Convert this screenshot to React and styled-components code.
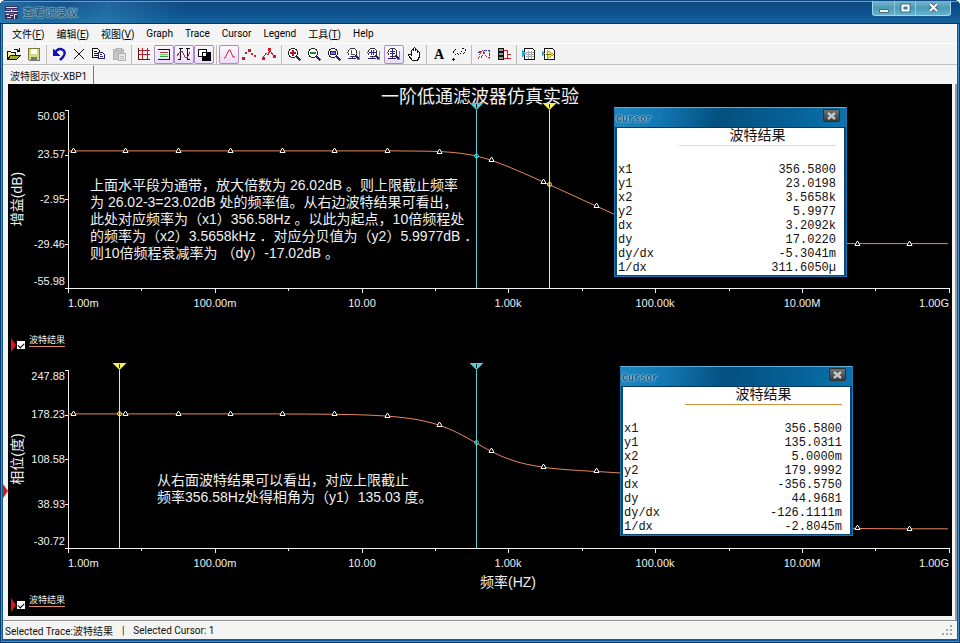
import styled, { createGlobalStyle, css } from "styled-components";

const GlobalStyle = createGlobalStyle`
  * {
    box-sizing: border-box;
  }
  body {
    margin: 0;
    background: #fff;
    font-family: Roboto, "Noto Sans CJK SC", sans-serif;
    font-size: 10px;
    color: #111;
  }
  button {
    font: inherit;
    padding: 0;
    margin: 0;
    border: 0;
    background: none;
  }
`;

const Frame = styled.div`
  min-height: 100vh;
  display: flex;
  flex-direction: column;
  padding: 0 3px 4px;
  border-radius: 6px 6px 0 0;
  overflow: hidden;
  background: #0c5c9c;
  box-shadow: inset 0 0 0 1px #0b3a6c, inset 0 0 0 2px #3c8cc8;
`;

const TitleBar = styled.header`
  height: 24px;
  margin: 0 -3px;
  padding: 0 9px 0 5px;
  display: flex;
  justify-content: space-between;
  border-top: 1px solid #0d4a83;
  border-bottom: 1px solid #06305e;
  box-shadow: inset 0 1px 0 #5b9fd6;
  background: linear-gradient(
      115deg,
      rgba(80, 170, 215, 0.4) 0,
      rgba(80, 170, 215, 0.1) 55px,
      rgba(80, 170, 215, 0.3) 100px,
      transparent 170px
    ),
    linear-gradient(#10467e, #0d5290 50%, #136299);
`;

const WindowTitle = styled.h1`
  margin: 0;
  display: flex;
  align-items: center;
  gap: 5px;
  font-size: 11px;
  font-weight: 700;
  color: #2b5f80;
  text-shadow: 0 0 1px #b5d4e0, 0 0 1px #8fbcd0, 0 0 2px #7fb0c8;
`;

const WindowButtons = styled.div`
  display: flex;
  height: 15px;
  border: 1px solid #a0d6e6;
  border-top: 0;
  border-radius: 0 0 3px 3px;
  background: linear-gradient(#79b5cb, #4a9bb9 50%, #67b3cb);
`;

const WindowButton = styled.button`
  width: ${(props) => (props.$wide ? "35px" : "21px")};
  display: flex;
  align-items: center;
  justify-content: center;
  & + & {
    border-left: 1px solid #94cbdc;
  }
`;

const MenuBar = styled.nav`
  height: 20px;
  display: flex;
  align-items: center;
  gap: 12px;
  padding-left: 9px;
  background: #f4f4f4;
  border-bottom: 1px solid #fff;
`;

const Toolbar = styled.div`
  height: 21px;
  display: flex;
  align-items: center;
  padding-left: 1px;
  background: #f3f3f3;
  border-bottom: 1px solid #c0c0c0;
`;

const Separator = styled.span`
  width: 1px;
  height: 19px;
  margin: 0 2px;
  background: #bdbdbd;
`;

const ToolButton = styled.button`
  width: 20px;
  height: 19px;
  display: flex;
  align-items: center;
  justify-content: center;
  border-radius: 2px;
  ${(props) =>
    props.$pressed &&
    css`
      border: 1px solid #a98fc0;
      background: linear-gradient(#fbf6fe, #ecdcf8);
    `}
`;

const Tabs = styled.div`
  height: 19px;
  display: flex;
  background: #f4f4f4;
`;

const Tab = styled.button`
  padding: 0 6px 0 7px;
  border-top: 1px solid #fff;
  border-right: 1px solid #777;
  font-size: 10px;
  color: #111;
`;

const Workspace = styled.div`
  flex: 1;
  display: flex;
  position: relative;
  padding: 0 5px 4px;
  background: #f4f4f4;
  border-bottom: 1px solid #8d8d8d;
  box-shadow: inset -2px 0 0 #9a9a9a;
`;

const PanePointer = styled.span`
  position: absolute;
  left: 0;
  top: 400px;
  border: 7px solid transparent;
  border-left: 5px solid #d8161c;
  border-right: 0;
`;

const Canvas = styled.main`
  flex: 1;
  position: relative;
  background: #000;
  color: #eee;
`;

const Plot = styled.svg`
  display: block;
  width: 100%;
  fill: #f0f0f0;
  font-family: "Liberation Sans", "Noto Sans CJK SC", sans-serif;
  font-size: 14px;
`;

const TickText = styled.text`
  font-size: 11px;
`;

const TitleText = styled.text`
  font-size: 18px;
`;

const Legend = styled.label`
  height: 22px;
  display: flex;
  align-items: center;
  padding-left: 3px;
  font-size: 9px;
  line-height: 12px;
`;

const LegendPointer = styled.span`
  margin-top: 8px;
  border: 7px solid transparent;
  border-left: 5px solid #d8161c;
  border-right: 0;
`;

const LegendCheck = styled.input`
  appearance: none;
  width: 8px;
  height: 8px;
  margin: 7px 4px 0 1px;
  background: #fff;
  &:checked::after {
    content: "";
    display: block;
    width: 5px;
    height: 3px;
    margin: 2px 0 0 1px;
    border: solid #000;
    border-width: 0 0 1px 1px;
    transform: rotate(-45deg);
  }
`;

const LegendText = styled.span`
  height: 13px;
  margin-top: -1px;
  border-bottom: 1px solid #e08a5c;
`;

const CursorWindow = styled.section`
  position: absolute;
  top: ${(props) => props.$top}px;
  right: ${(props) => props.$right}px;
  width: 233px;
  padding: 0 2px 1px;
  border: 1px solid #1978b4;
  border-top-color: #5ab0dc;
  background: #06477c;
  color: #111;
`;

const CursorBar = styled.header`
  height: 20px;
  margin: 0 -2px;
  padding: 1px 6px 0 1px;
  display: flex;
  justify-content: space-between;
  border-bottom: 1px solid #04365f;
  background: linear-gradient(
    100deg,
    #1c88bf,
    #1277b2 20%,
    #04507f 45%,
    #056096 75%,
    #0b74ae
  );
`;

const CursorTitle = styled.h2`
  margin: 5px 0 0;
  font: bold 10px/12px "Liberation Mono", monospace;
  color: #12507c;
  text-shadow: 0 0 1px #b8e2f0, 0 0 1px #a4d6ea, 0 0 2px #8fcce4;
`;

const CloseButton = styled.button`
  width: 17px;
  height: 13px;
  display: flex;
  align-items: center;
  justify-content: center;
  border: 1px solid #2a2f33;
  border-radius: 0 0 2px 2px;
  background: linear-gradient(#6e7274, #383b3d);
`;

const Results = styled.table`
  width: 100%;
  height: 147px;
  border-spacing: 0;
  background: #fff;
  font: 12px/14px "Liberation Mono", monospace;
  th,
  td {
    height: 14px;
    padding: 0 0 0 1px;
    font-weight: 400;
    text-align: left;
  }
  td {
    padding-right: 8px;
    text-align: right;
  }
`;

const TraceHead = styled.th`
  && {
    width: 165px;
    height: 35px;
    padding: 0 8px 0 0;
    vertical-align: top;
    font: 14px/12px "Noto Sans CJK SC", sans-serif;
    text-align: center;
  }
`;

const TraceName = styled.span`
  display: block;
  height: 18px;
  border-bottom: 1px solid ${(props) => props.$color};
`;

const StatusBar = styled.footer`
  height: 18px;
  display: flex;
  align-items: center;
  gap: 9px;
  padding: 0 4px 0 2px;
  background: #f4f4f2;
  border-top: 1px solid #fff;
`;

const Grip = styled.svg`
  margin-left: auto;
  fill: #a8a8a8;
`;

const Icon = ({ children }) => (
  <svg
    width="16"
    height="16"
    viewBox="0 0 16 16"
    fill="none"
    stroke="#111"
    shapeRendering="crispEdges"
  >
    {children}
  </svg>
);

const Lens = ({ children }) => (
  <Icon>
    <circle cx="7" cy="7" r="4.5" fill="#fff" stroke="#222" />
    <path d="M10.5 10.5l4 4" stroke="#22227a" strokeWidth="2" />
    {children}
  </Icon>
);

const MiniLens = ({ children }) => (
  <Icon>
    <circle cx="6.5" cy="6.5" r="4.5" fill="#fff" stroke="#333" />
    <path d="M2 12.5h8" stroke="#22227a" />
    <path d="M9.5 9.5l4 4" stroke="#22227a" strokeWidth="2" />
    <path d="M13.5 5v8l-2 1" stroke="#a08a20" />
    {children}
  </Icon>
);

const icons = {
  open: (
    <Icon>
      <path d="M1.5 13.5v-8h3l1 1h4v3" fill="#f4f08a" />
      <path d="M1.5 13.5l3-4h10l-4 4z" fill="#a8a838" />
      <path d="M8 3.5h2l3 1M13.5 2v4M11 5.5h3" />
    </Icon>
  ),
  save: (
    <Icon>
      <path d="M2.5 2.5h11v12h-10l-1-1z" fill="#d6d88a" stroke="#77773a" />
      <path d="M5 3h6v5H5z" fill="#fff" stroke="none" />
      <path d="M5 11h6v3H5z" fill="#777" stroke="none" />
      <path d="M13.5 3v11.5H4" stroke="#777" />
    </Icon>
  ),
  undo: (
    <Icon>
      <path
        d="M4 7c2-4 5-5 8-3 3 2 2 6-3 10"
        stroke="#1212b8"
        strokeWidth="2.4"
        shapeRendering="auto"
      />
      <path d="M2 3v7h7z" fill="#1212b8" stroke="none" />
    </Icon>
  ),
  cut: (
    <Icon>
      <path d="M3 3l10 10M13 3L3 13" />
    </Icon>
  ),
  copy: (
    <Icon>
      <path d="M1.5 2.5h5l2 2v7h-7z" fill="#fff" />
      <path d="M3 5.5h3M3 7.5h4M3 9.5h4" />
      <path d="M7.5 6.5h4l2 2v4h-6z" fill="#fff" stroke="#22227a" />
      <path d="M9 8.5h2M9 10.5h3" stroke="#22227a" />
    </Icon>
  ),
  paste: (
    <Icon>
      <path d="M2.5 3.5h10v10h-10z" fill="#c4c4c4" stroke="#b4b4b4" />
      <path d="M5 2.5h5v2H5z" fill="#ddd" stroke="#aaa" />
      <path d="M7.5 7.5h7v7h-7z" fill="#e8e8e8" stroke="#b0b0b0" />
      <path d="M9 10.5h4M9 12.5h4" stroke="#bbb" />
    </Icon>
  ),
  grid: (
    <Icon>
      <path d="M2 4.5h12M2 8.5h12M6.5 2v11M11.5 2v11" stroke="#b8202c" />
      <path d="M2.5 2v11.5H14" stroke="#6c1018" />
    </Icon>
  ),
  legend: (
    <Icon>
      <path d="M2 3.5h12M2 13.5h12M13.5 3v11" />
      <path d="M4 6.5h8" stroke="#c03038" />
      <path d="M4 8.5h8" stroke="#60e060" />
      <path d="M4 10.5h8" stroke="#3c9848" />
    </Icon>
  ),
  cursors: (
    <Icon>
      <path d="M4.5 3v11M11.5 3v11M2.5 2.5h4M9.5 2.5h4M2 13.5h3M11 13.5h3" />
      <path d="M1 10l3-4 2-1 3 6 2 1 3-6" stroke="#b02838" />
    </Icon>
  ),
  invert: (
    <Icon>
      <path d="M2.5 3.5h8v7h-8z" fill="#fff" />
      <path d="M6 6h9v9H6z" fill="#000" stroke="none" />
      <path d="M7 7h3v3H7z" fill="#fff" stroke="none" />
    </Icon>
  ),
  line: (
    <Icon>
      <path d="M3 12h1l4-8h1l3 7h2" stroke="#c42434" shapeRendering="auto" />
    </Icon>
  ),
  points: (
    <Icon>
      <path
        d="M1 11h3v3H1zM4 6h2v2H4zM7 3h3v3H7zM10 7h2v2h-2zM13 9h2v2h-2z"
        fill="#cc1c24"
        stroke="none"
      />
    </Icon>
  ),
  linePoints: (
    <Icon>
      <path d="M2 12l3-5 2 2 2-5 4 7" stroke="#cc1c24" />
      <path
        d="M1 11h3v3H1zM7 2h3v3H7zM12 9h3v3h-3z"
        fill="#cc1c24"
        stroke="none"
      />
    </Icon>
  ),
  zoomIn: (
    <Lens>
      <path d="M4 7h6M7 4v6" stroke="#b01820" strokeWidth="2" />
    </Lens>
  ),
  zoomOut: (
    <Lens>
      <path d="M4 7h6" stroke="#188830" strokeWidth="2" />
    </Lens>
  ),
  zoomFull: (
    <Lens>
      <path d="M4.5 5.5h5v3h-5z" fill="#7878c8" stroke="#22227a" />
    </Lens>
  ),
  zoomArea: (
    <MiniLens>
      <path d="M5.5 4v4.5H9" stroke="#555" />
    </MiniLens>
  ),
  zoomX: (
    <MiniLens>
      <path d="M3 6.5h7M5.5 4v5M7.5 4v5" stroke="#2222b0" />
    </MiniLens>
  ),
  zoomY: (
    <MiniLens>
      <path d="M6.5 3v7M4 5.5h5M4 7.5h5" stroke="#2222b0" />
    </MiniLens>
  ),
  hand: (
    <Icon>
      <path
        d="M5.5 9V4.5l1-1 1 1v-2l1-1 1 1v2l1-1 1 1v2l1-1 1 1v4l-2 4h-5l-4-5v-1h2z"
        fill="#fff"
      />
    </Icon>
  ),
  text: (
    <svg width="16" height="16" viewBox="0 0 16 16">
      <text
        x="8"
        y="13"
        textAnchor="middle"
        fontFamily="Liberation Serif, serif"
        fontWeight="700"
        fontSize="14"
      >
        A
      </text>
    </svg>
  ),
  data: (
    <Icon>
      <path d="M4.5 3l-2 3 2 3M11.5 2l3 2-2 4" strokeDasharray="2 1" />
      <path d="M6 7.5h1M7 8.5h1M9 7.5h1M10 5.5h1M1 13.5h3M2.5 12v3" />
    </Icon>
  ),
  overlay: (
    <Icon>
      <path d="M2 13l3-7 2-2 3 6 4 3" stroke="#c03848" strokeDasharray="3 1" />
      <path d="M2 7l3-2M5 12l4-8h4l1 8" stroke="#3434b8" strokeDasharray="3 1" />
    </Icon>
  ),
  merge: (
    <Icon>
      <path d="M2.5 2.5h5v3h-5zM2.5 6.5h5v3h-5zM2.5 10.5h5v3h-5z" fill="#999" />
      <path d="M8 4.5h3.5v8H8M12 8.5h3M10 12.5h5" stroke="#c81c28" />
    </Icon>
  ),
  exportSheet: (
    <Icon>
      <path d="M3.5 2.5h8l2 2v9h-10z" fill="#fff" />
      <path d="M5 6.5h8M5 8.5h8M5 10.5h8M7.5 5v8M10.5 5v8" stroke="#aaa" />
      <path d="M1 4l4 3.5L1 11z" fill="#28a8d8" stroke="none" />
    </Icon>
  ),
  exportPlay: (
    <Icon>
      <path d="M3.5 2.5h8l2 2v9h-10z" fill="#fff" />
      <path d="M6.5 4.5l6 4-6 4z" fill="#ffe840" stroke="#b8a010" />
      <path d="M5 8.5h3M8 8.5h2" stroke="#776a10" />
      <path d="M1 4l3 3.5L1 11z" fill="#28a8d8" stroke="none" />
    </Icon>
  ),
};

const toolGroups = [
  [["open", "Open"], ["save", "Save"]],
  [["undo", "Undo"], ["cut", "Cut"], ["copy", "Copy"], ["paste", "Paste"]],
  [
    ["grid", "Show grid"],
    ["legend", "Show legend", true],
    ["cursors", "Show cursors", true],
    ["invert", "Black and white", true],
  ],
  [
    ["line", "Lines", true],
    ["points", "Symbols"],
    ["linePoints", "Lines and symbols"],
  ],
  [
    ["zoomIn", "Zoom in"],
    ["zoomOut", "Zoom out"],
    ["zoomFull", "Zoom full"],
    ["zoomArea", "Zoom area"],
    ["zoomX", "Zoom horizontal"],
    ["zoomY", "Zoom vertical", true],
    ["hand", "Pan"],
  ],
  [["text", "Add text"], ["data", "Add data point label"]],
  [["overlay", "Overlay traces"], ["merge", "Merge traces"]],
  [["exportSheet", "Export to Excel"], ["exportPlay", "Export to LabVIEW"]],
];

const menus = [
  ["文件", "F"],
  ["编辑", "E"],
  ["视图", "V"],
  ["Graph"],
  ["Trace"],
  ["Cursor"],
  ["Legend"],
  ["工具", "T"],
  ["Help"],
];

const CUTOFF = 356.58;
const LEFT = 60;
const DECADE = 73.4;
const AXIS_HEIGHT = 178;
const xLabels = ["1.00m", "100.00m", "10.00", "1.00k", "100.00k", "10.00M", "1.00G"];

const toX = (f) => LEFT + (Math.log10(f) + 3) * DECADE;
const toF = (x) => 10 ** ((x - LEFT) / DECADE - 3);
const degrees = (ratio) => (Math.atan(ratio) * 180) / Math.PI;

const gain = (f) => Math.max(-29.2, 26.02 - 10 * Math.log10(1 + (f / CUTOFF) ** 2));
const phase = (f) => 180 - degrees(f / CUTOFF) - degrees(f / 6e5);

const plots = {
  gain: {
    height: 246,
    top: 26,
    fn: gain,
    max: 50.08,
    min: -55.98,
    yLabels: ["50.08", "23.57", "-2.95", "-29.46", "-55.98"],
    yTitle: "增益(dB)",
    title: "一阶低通滤波器仿真实验",
    cursors: [
      { f: CUTOFF, color: "#4fd0d4", id: "1" },
      { f: 3565.8, color: "#f0f05a", id: "2" },
    ],
    noteX: 82,
    noteY: 80,
    note: [
      "上面水平段为通带，放大倍数为 26.02dB 。则上限截止频率",
      "为 26.02-3=23.02dB 处的频率值。从右边波特结果可看出，",
      "此处对应频率为（x1）356.58Hz 。以此为起点，10倍频程处",
      "的频率为（x2）3.5658kHz ．对应分贝值为（y2）5.9977dB ．",
      "则10倍频程衰减率为 （dy）-17.02dB 。",
    ],
  },
  phase: {
    height: 238,
    top: 18,
    fn: phase,
    max: 247.88,
    min: -30.72,
    yLabels: ["247.88", "178.23", "108.58", "38.93", "-30.72"],
    yTitle: "相位(度)",
    xTitle: "频率(HZ)",
    cursors: [
      { f: CUTOFF, color: "#4fd0d4", id: "1" },
      { f: 0.005, color: "#f0f05a", id: "2" },
    ],
    noteX: 149,
    noteY: 115,
    note: [
      "从右面波特结果可以看出，对应上限截止",
      "频率356.58Hz处得相角为（y1）135.03 度。",
    ],
  },
};

const BodePlot = ({ plot }) => {
  const toY = (v) =>
    ((plot.max - v) / (plot.max - plot.min)) * AXIS_HEIGHT + 0.5;
  const curve = Array.from({ length: 441 }, (_, i) => {
    const x = LEFT + i * 2;
    return `${x},${toY(plot.fn(toF(x))).toFixed(1)}`;
  }).join(" ");
  const marks = Array.from({ length: 17 }, (_, i) => 65 + Math.round(i * 52.25));

  return (
    <Plot viewBox={`0 0 944 ${plot.height}`} role="img" aria-label={plot.yTitle}>
      {plot.title && (
        <TitleText x="472" y="19" textAnchor="middle">
          {plot.title}
        </TitleText>
      )}
      <g transform={`translate(0 ${plot.top})`}>
        <g stroke="#f0f0f0" fill="none" shapeRendering="crispEdges">
          <path d="M60.5 0V182M57 178.5H941.5" />
          {plot.yLabels.map((label, i) => (
            <path key={label} d={`M57 ${Math.round(i * 44.5) + 0.5}h4`} />
          ))}
          {Array.from({ length: 13 }, (_, i) => (
            <path
              key={i}
              d={`M${Math.round(LEFT + i * DECADE) + 0.5} 178v${i % 2 ? 3 : 5}`}
            />
          ))}
        </g>
        {plot.yLabels.map((label, i) => (
          <TickText key={label} x="57" y={[10, 48, 93, 138, 175][i]} textAnchor="end">
            {label}
          </TickText>
        ))}
        {xLabels.map((label, i) => (
          <TickText
            key={label}
            x={Math.round(LEFT + i * 2 * DECADE)}
            y="197"
            textAnchor={i === 0 ? "start" : i === 6 ? "end" : "middle"}
          >
            {label}
          </TickText>
        ))}
        <text transform="translate(14 89) rotate(-90)" textAnchor="middle">
          {plot.yTitle}
        </text>
        {plot.xTitle && (
          <text x="500" y="217" textAnchor="middle">
            {plot.xTitle}
          </text>
        )}
        <polyline points={curve} fill="none" stroke="#e8865c" />
        {marks.map((x) => {
          const y = Math.round(toY(plot.fn(toF(x))));
          return (
            <path
              key={x}
              d={`M${x - 2} ${y + 1.5}h5l-2-4h-1z`}
              fill="#000"
              stroke="#fff"
            />
          );
        })}
        {plot.cursors.map((cursor) => {
          const x = Math.round(toX(cursor.f)) + 0.5;
          return (
            <g key={cursor.id} stroke={cursor.color}>
              <path d={`M${x} 0V178`} />
              <path d={`M${x - 7} -7h14l-7 7z`} fill={cursor.color} stroke="none" />
              <path d={`M${x} -6v4`} stroke="#222" />
              <circle cx={x} cy={toY(plot.fn(cursor.f))} r="2" fill="none" />
            </g>
          );
        })}
        <text>
          {plot.note.map((line, i) => (
            <tspan key={line} x={plot.noteX} y={plot.noteY + i * 17}>
              {line}
            </tspan>
          ))}
        </text>
      </g>
    </Plot>
  );
};

const TraceLegend = () => (
  <Legend>
    <LegendPointer />
    <LegendCheck type="checkbox" defaultChecked />
    <LegendText>波特结果</LegendText>
  </Legend>
);

const CursorPanel = ({ top, right, color, rows }) => (
  <CursorWindow $top={top} $right={right}>
    <CursorBar>
      <CursorTitle>Cursor</CursorTitle>
      <CloseButton aria-label="Close cursor window">
        <svg width="9" height="8" viewBox="0 0 9 8">
          <path d="M1 1l7 6M8 1L1 7" stroke="#c4c8ca" strokeWidth="2.4" />
        </svg>
      </CloseButton>
    </CursorBar>
    <Results>
      <thead>
        <tr>
          <th />
          <TraceHead>
            <TraceName $color={color}>波特结果</TraceName>
          </TraceHead>
        </tr>
      </thead>
      <tbody>
        {rows.map(([name, value]) => (
          <tr key={name}>
            <th scope="row">{name}</th>
            <td>{value}</td>
          </tr>
        ))}
      </tbody>
    </Results>
  </CursorWindow>
);

const gainRows = [
  ["x1", "356.5800"],
  ["y1", "23.0198"],
  ["x2", "3.5658k"],
  ["y2", "5.9977"],
  ["dx", "3.2092k"],
  ["dy", "17.0220"],
  ["dy/dx", "-5.3041m"],
  ["1/dx", "311.6050µ"],
];

const phaseRows = [
  ["x1", "356.5800"],
  ["y1", "135.0311"],
  ["x2", "5.0000m"],
  ["y2", "179.9992"],
  ["dx", "-356.5750"],
  ["dy", "44.9681"],
  ["dy/dx", "-126.1111m"],
  ["1/dx", "-2.8045m"],
];

const App = () => {
  return (
    <Frame>
      <GlobalStyle />
      <TitleBar>
        <WindowTitle>
          <svg width="13" height="13" viewBox="0 0 13 13" shapeRendering="crispEdges">
            <path d="M0 0h13v13H0z" fill="#3a2d60" />
            <path
              d="M1 1.5h11M0 5.5h6M6.5 4v2M7 5.5h6M1 8.5h3M5 9.5h3M9 8.5h3M2 11.5h4M9.5 8v5"
              stroke="#e8dcec"
              fill="none"
            />
            <path d="M1 3.5h11M1 7.5h8" stroke="#b05a7c" />
          </svg>
          查看记录仪
        </WindowTitle>
        <WindowButtons>
          <WindowButton aria-label="Minimize">
            <svg width="12" height="11">
              <path d="M1.5 6.5h9v3h-9z" fill="#e8f0f2" stroke="#4c6c7c" />
            </svg>
          </WindowButton>
          <WindowButton aria-label="Maximize">
            <svg width="11" height="11">
              <path d="M2.5 2.5h6v5h-6z" fill="none" stroke="#46687a" strokeWidth="4" />
              <path d="M2.5 2.5h6v5h-6z" fill="#4a8098" stroke="#fff" strokeWidth="2" />
            </svg>
          </WindowButton>
          <WindowButton $wide aria-label="Close">
            <svg width="11" height="10" viewBox="0 0 11 10">
              <path d="M2 1l7 7M9 1L2 8" stroke="#46687a" strokeWidth="4" />
              <path d="M2 1l7 7M9 1L2 8" stroke="#fff" strokeWidth="2" />
            </svg>
          </WindowButton>
        </WindowButtons>
      </TitleBar>
      <MenuBar>
        {menus.map(([name, accel]) => (
          <button key={name}>
            {name}
            {accel && (
              <>
                (<u>{accel}</u>)
              </>
            )}
          </button>
        ))}
      </MenuBar>
      <Toolbar role="toolbar">
        {toolGroups.map((group, i) => [
          i > 0 && <Separator key={`separator-${i}`} />,
          ...group.map(([icon, label, pressed]) => (
            <ToolButton key={icon} aria-label={label} $pressed={pressed}>
              {icons[icon]}
            </ToolButton>
          )),
        ])}
      </Toolbar>
      <Tabs role="tablist">
        <Tab role="tab" aria-selected="true">
          波特图示仪-XBP1
        </Tab>
      </Tabs>
      <Workspace>
        <PanePointer />
        <Canvas>
          <BodePlot plot={plots.gain} />
          <TraceLegend />
          <BodePlot plot={plots.phase} />
          <TraceLegend />
          <CursorPanel top={23} right={105} color="#f4dca0" rows={gainRows} />
          <CursorPanel top={282} right={99} color="#d2903c" rows={phaseRows} />
        </Canvas>
      </Workspace>
      <StatusBar>
        <span>Selected Trace:波特结果</span>
        <span>|</span>
        <span>Selected Cursor: 1</span>
        <Grip width="11" height="11">
          <path d="M8 0h2v2H8zM8 4h2v2H8zM4 4h2v2H4zM8 8h2v2H8zM4 8h2v2H4zM0 8h2v2H0z" />
        </Grip>
      </StatusBar>
    </Frame>
  );
};

export default App;
